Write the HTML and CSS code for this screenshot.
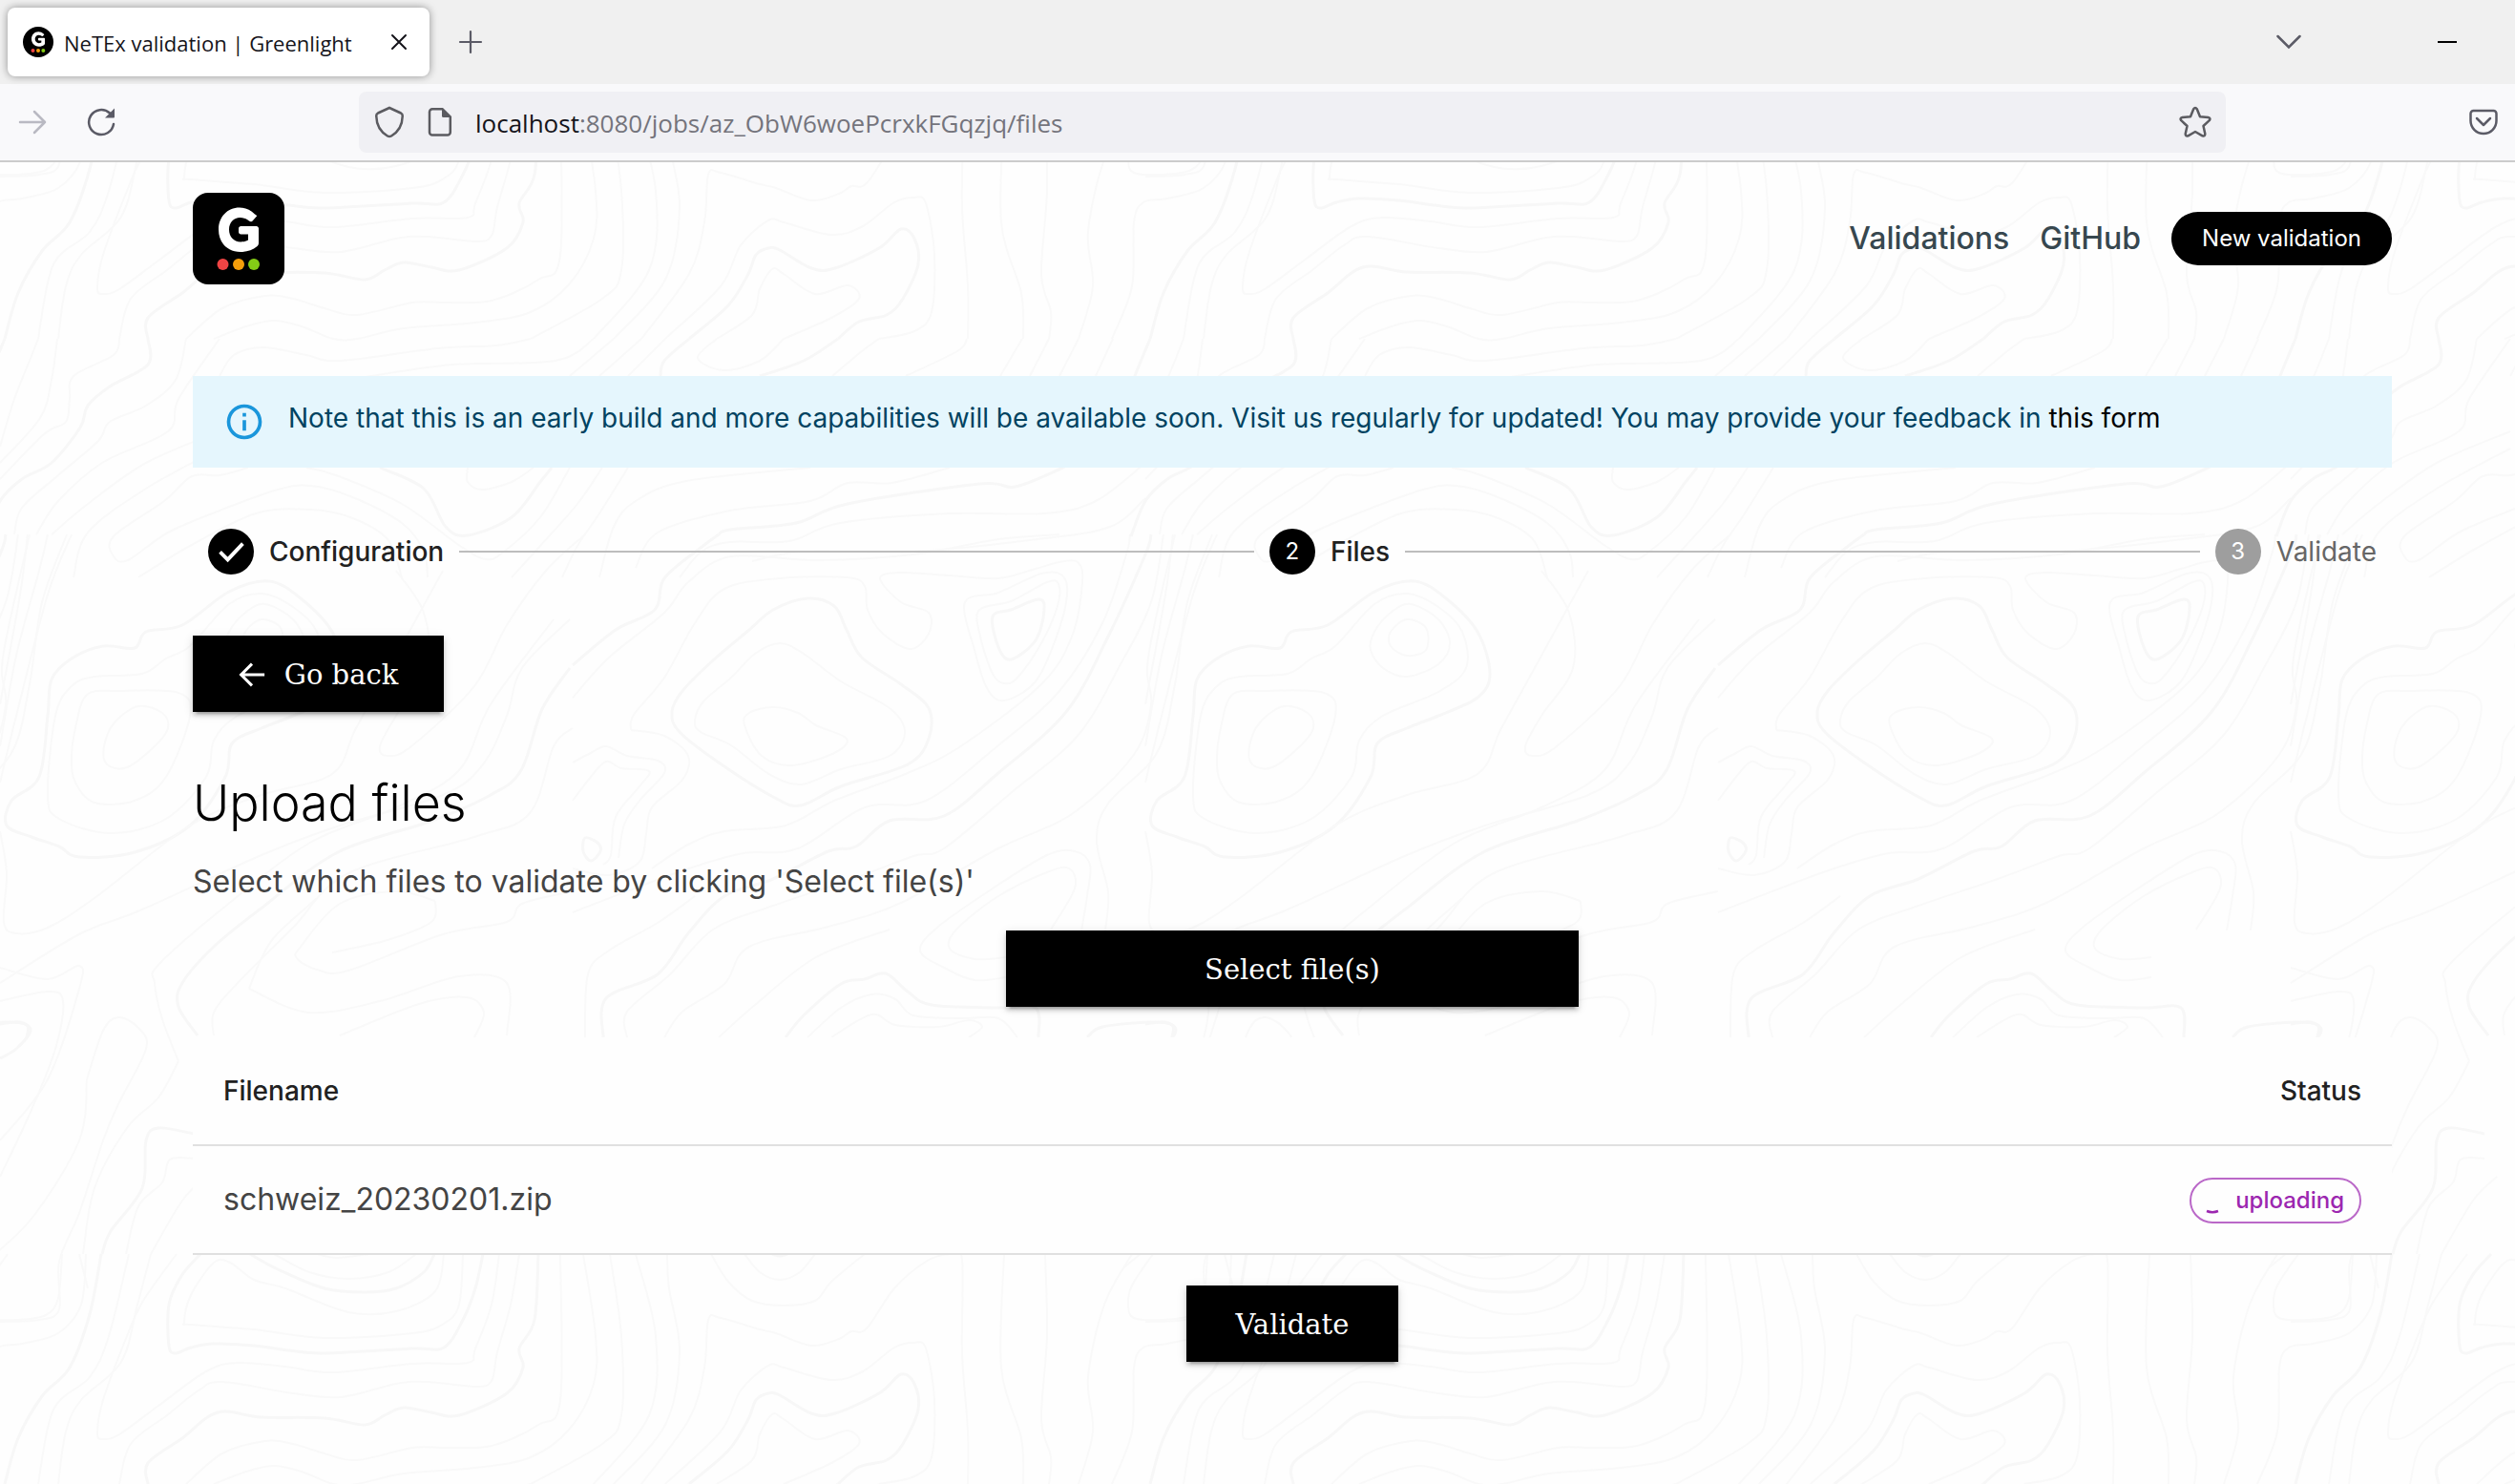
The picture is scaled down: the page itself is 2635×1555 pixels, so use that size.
FILE: index.html
```html
<!DOCTYPE html>
<html lang="en">
<head>
<meta charset="utf-8">
<title>NeTEx validation | Greenlight</title>
<link rel="stylesheet" href="styles.css">
</head>
<body>
<svg class="sprite" aria-hidden="true">
  <symbol id="mark" viewBox="0 0 96 96">
    <path d="M65 22.500C60 17.500 54.500 15.500 49 15.500C36 15.500 27 25.500 27 38.500C27 52 36 62 50 62C57 62 62.500 60 67.500 56C68.500 55 69 54 69 52.500V37.500C69 36 68 35 66.500 35H50.500C49 35 48 36 48 37.500V41C48 42.500 49 43.500 50.500 43.500H58V49.500C55.500 51 53 51.500 50 51.500C43 51.500 38 46 38 38.500C38 31 43 26 49.500 26C53 26 56 27 59 29.500C60.500 30.700 62 30.500 63 29L67 24.500C67.500 24 66.500 23.500 65 22.500Z" fill="#fff"/>
    <circle cx="31.500" cy="75" r="6" fill="#ef4444"/>
    <circle cx="48" cy="75" r="6" fill="#f59e0b"/>
    <circle cx="64" cy="75" r="6" fill="#84cc16"/>
  </symbol>
</svg>

<header class="browser">
  <div class="tabstrip">
    <div class="tab">
      <svg class="favicon" viewBox="0 0 96 96" aria-hidden="true"><circle cx="48" cy="48" r="48"/><use href="#mark" width="96" height="96"/></svg>
      <span class="tab-title">NeTEx validation | Greenlight</span>
      <button class="tool tab-close" aria-label="Close tab"><svg width="18" height="18" viewBox="0 0 18 18"><path d="M2 2l14 14M16 2L2 16" stroke="#15141a" stroke-width="2" stroke-linecap="round"/></svg></button>
    </div>
    <button class="tool" aria-label="New tab"><svg width="26" height="26" viewBox="0 0 26 26"><path d="M13 2v22M2 13h22" stroke="#5b5b66" stroke-width="2.200" stroke-linecap="round"/></svg></button>
    <div class="window-tools">
      <button class="tool" aria-label="List all tabs"><svg width="26" height="16" viewBox="0 0 26 16"><path d="M1.500 2L13 13.500L24.500 2" fill="none" stroke="#5b5b66" stroke-width="2.500" stroke-linecap="round"/></svg></button>
      <button class="tool" aria-label="Minimize"><svg width="20" height="2" viewBox="0 0 20 2"><path d="M0 1h20" stroke="#000" stroke-width="2"/></svg></button>
    </div>
  </div>
  <div class="toolbar">
    <div class="history">
      <button class="tool" aria-label="Forward" disabled><svg width="30" height="28" viewBox="0 0 30 28"><path d="M2 14h26M17 3l11 11L17 25" fill="none" stroke="#b9b9c2" stroke-width="2.500" stroke-linecap="round" stroke-linejoin="round"/></svg></button>
      <button class="tool" aria-label="Reload"><svg width="30" height="30" viewBox="0 0 30 30"><path d="M28 17A13 13 0 1 1 24 5.500" fill="none" stroke="#5b5b66" stroke-width="2.500" stroke-linecap="round"/><path d="M29 .5V9.500a1 1 0 0 1-1 1H19Z" fill="#5b5b66"/></svg></button>
    </div>
    <div class="urlbar">
      <svg width="32" height="34" viewBox="0 0 32 34" aria-hidden="true"><path d="M16 2L28 7.500Q30 8.500 29.700 11C29.500 20 26.500 26.500 18 31.500Q16 32.700 14 31.500C5.500 26.500 2.500 20 2.300 11Q2 8.500 4 7.500Z" fill="none" stroke="#5b5b60" stroke-width="2.500"/></svg>
      <svg width="26" height="32" viewBox="0 0 26 32" aria-hidden="true"><path d="M5 2.200H15.500L23.800 10.500V26.500A3 3 0 0 1 20.800 29.500H5A3 3 0 0 1 2 26.500V5.200A3 3 0 0 1 5 2.200Z" fill="none" stroke="#5b5b60" stroke-width="2.500"/><path d="M15 2V9.500A1.500 1.500 0 0 0 16.500 11H24.500Z" fill="#5b5b60"/></svg>
      <p class="url"><span class="url-host">localhost</span>:8080/jobs/az_ObW6woePcrxkFGqzjq/files</p>
      <button class="tool" aria-label="Bookmark this page"><svg width="36" height="34" viewBox="0 0 36 34"><path d="M16.200 3.300Q18 .8 19.800 3.300L23 11.200L31.500 12Q34.500 12.800 32.800 15.200L26.500 21L28.300 29.300Q28.300 32.300 25.500 31.300L18 27L10.500 31.300Q7.700 32.300 7.700 29.300L9.500 21L3.200 15.200Q1.500 12.800 4.500 12L13 11.200Z" fill="none" stroke="#5b5b60" stroke-width="2.500" stroke-linejoin="round"/></svg></button>
    </div>
    <button class="tool pocket" aria-label="Save to Pocket"><svg width="30" height="28" viewBox="0 0 30 28"><path d="M4.500 2h21A3 3 0 0 1 28.500 5v7.500a13.500 13.500 0 0 1-27 0V5A3 3 0 0 1 4.500 2Z" fill="none" stroke="#5b5b66" stroke-width="2.500"/><path d="M8 10l7 7 7-7" fill="none" stroke="#5b5b66" stroke-width="2.500" stroke-linecap="round" stroke-linejoin="round"/></svg></button>
  </div>
</header>

<div class="page">
  <svg class="contours" aria-hidden="true">
    <defs><pattern id="contours" width="1200" height="1200" patternUnits="userSpaceOnUse"></pattern></defs>
    <rect width="100%" height="100%" fill="url(#contours)"/>
  </svg>
  <div class="container">
    <header class="site-header">
      <a class="logo" href="#" aria-label="Greenlight"><svg width="96" height="96" aria-hidden="true"><use href="#mark"/></svg></a>
      <nav class="nav">
        <a href="#">Validations</a>
        <a href="#">GitHub</a>
        <button class="pill">New validation</button>
      </nav>
    </header>
    <main>
      <div class="alert" role="note">
        <svg width="44" height="44" viewBox="0 0 24 24" aria-hidden="true"><path fill="#1a96db" d="M11,9H13V7H11M12,20C7.590,20 4,16.410 4,12C4,7.590 7.590,4 12,4C16.410,4 20,7.590 20,12C20,16.410 16.410,20 12,20M12,2A10,10 0 0,0 2,12A10,10 0 0,0 12,22A10,10 0 0,0 22,12A10,10 0 0,0 12,2M11,17H13V11H11V17Z"/></svg>
        <p>Note that this is an early build and more capabilities will be available soon. Visit us regularly for updated! You may provide your feedback in <a href="#">this form</a></p>
      </div>

      <ol class="stepper">
        <li class="step">
          <span class="step-icon"><svg width="48" height="48" viewBox="0 0 24 24" aria-label="Completed"><path d="M6.300 12.200L10.300 16.200L18.200 7.800" fill="none" stroke="#fff" stroke-width="1.900"/></svg></span>
          <span>Configuration</span>
        </li>
        <li class="connector" aria-hidden="true"></li>
        <li class="step" aria-current="step"><span class="step-icon">2</span><span>Files</span></li>
        <li class="connector" aria-hidden="true"></li>
        <li class="step step-pending"><span class="step-icon">3</span><span>Validate</span></li>
      </ol>

      <button class="button button-back">
        <svg width="28" height="28" viewBox="0 0 32 32" aria-hidden="true"><path d="M31 16H4M16 3L3 16L16 29" fill="none" stroke="#fff" stroke-width="3.500"/></svg>
        Go back
      </button>

      <h1>Upload files</h1>
      <p class="lead">Select which files to validate by clicking 'Select file(s)'</p>
      <button class="button button-select">Select file(s)</button>

      <table class="files">
        <thead><tr><th scope="col">Filename</th><th scope="col" class="status">Status</th></tr></thead>
        <tbody><tr>
          <td>schweiz_20230201.zip</td>
          <td class="status"><span class="chip"><svg width="32" height="32" viewBox="0 0 32 32" aria-hidden="true"><path d="M10 27Q16 29.500 22 27" fill="none" stroke="#9c27b0" stroke-width="2.500"/></svg>uploading</span></td>
        </tr></tbody>
      </table>
      <button class="button button-validate">Validate</button>
    </main>
  </div>
</div>
<script src="contours.js"></script>
</body>
</html>
```
FILE: styles.css
```css
* { box-sizing: border-box; }

body {
  margin: 0;
  min-height: 100vh;
  display: flex;
  flex-direction: column;
  background: #fefefe;
  color: #444;
  font: 32px/48px Inter, "Liberation Sans", sans-serif;
}

h1, p, ol { margin: 0; }
a { color: inherit; text-decoration: none; }
button { font: inherit; border: 0; padding: 0; }
svg { display: block; flex: none; }
.sprite { position: absolute; width: 0; height: 0; }

/* Browser window */
.browser { font-family: "Segoe UI", "Open Sans", "Noto Sans", sans-serif; font-size: 22px; line-height: 32px; }
.tool { display: flex; background: none; }

.tabstrip {
  display: flex;
  align-items: center;
  gap: 30px;
  height: 88px;
  padding: 0 61px 0 8px;
  background: #f0f0f0;
}
.tab {
  display: flex;
  align-items: center;
  gap: 11px;
  width: 442px;
  height: 72px;
  padding: 0 23px 0 16px;
  border-radius: 8px;
  background: #fff;
  box-shadow: 0 0 8px rgba(0, 0, 0, .4);
  color: #15141a;
}
.favicon { width: 32px; height: 32px; }
.tab-title { padding-top: 2px; white-space: nowrap; }
.tab-close { margin-left: auto; }
.window-tools { display: flex; align-items: center; gap: 143px; margin-left: auto; }

.toolbar {
  display: flex;
  align-items: center;
  height: 82px;
  background: #f9f9fb;
  border-bottom: 2px solid #ccc;
}
.history { display: flex; align-items: center; gap: 42px; width: 376px; padding-left: 19px; }
.urlbar {
  flex: 1;
  display: flex;
  align-items: center;
  gap: 24px;
  height: 64px;
  padding: 0 14px 0 16px;
  border-radius: 8px;
  background: #f0f0f4;
}
.url { flex: 1; padding-top: 2px; font-size: 26px; color: #74747c; }
.url-host { color: #15141a; }
.pocket { margin: 0 18px 0 255px; }

/* Page */
.page { position: relative; flex: 1; }
.contours { position: absolute; inset: 0; width: 100%; height: 100%; }
.contours path { fill: none; stroke: #f9f9f9; stroke-width: 2; }
.contours .index { stroke: #f7f7f7; stroke-width: 3; }
.container { position: relative; padding: 32px 129px 96px 202px; }

.site-header { display: flex; justify-content: space-between; align-items: center; margin-bottom: 96px; }
.logo { border-radius: 16px; background: #000; }
.nav { display: flex; align-items: center; gap: 32px; color: #37474f; font-weight: 500; }
.pill {
  height: 56px;
  padding: 0 32px;
  border-radius: 28px;
  background: #000;
  color: #fff;
  font-size: 24px;
  font-weight: 400;
}

main { display: flex; flex-direction: column; align-items: flex-start; }

.alert {
  display: flex;
  align-items: center;
  gap: 24px;
  align-self: stretch;
  height: 96px;
  padding: 0 32px;
  background: #e5f6fd;
  color: #014361;
  font-size: 28px;
}
.alert p { padding-bottom: 8px; }
.alert a { color: #000; }

.stepper {
  display: flex;
  align-items: center;
  gap: 16px;
  align-self: stretch;
  margin: 64px 0;
  padding: 0 16px;
  list-style: none;
  font-size: 28px;
  font-weight: 500;
  color: #212121;
}
.step { display: flex; align-items: center; gap: 16px; }
.step-icon {
  display: flex;
  align-items: center;
  justify-content: center;
  width: 48px;
  height: 48px;
  border-radius: 50%;
  background: #000;
  color: #fff;
  font-size: 24px;
  font-weight: 400;
}
.step-pending { color: #666; font-weight: 400; }
.step-pending .step-icon { background: #9e9e9e; }
.connector { flex: 1; height: 2px; background: #bdbdbd; }

.button {
  display: flex;
  align-items: center;
  justify-content: center;
  height: 80px;
  padding-top: 2px;
  background: #000;
  color: #fff;
  font: 29px/48px "Roboto Slab", "DejaVu Serif", serif;
  box-shadow: 0 6px 2px -4px rgba(0, 0, 0, .2), 0 4px 4px rgba(0, 0, 0, .14), 0 2px 10px rgba(0, 0, 0, .12);
}
.button-back { gap: 20px; width: 263px; }
.button-select { align-self: center; width: 600px; }
.button-validate { align-self: center; width: 222px; }

h1 { margin: 64px 0 26px; font-size: 52px; line-height: 64px; font-weight: 300; color: #000; }
.lead { margin-bottom: 27px; }

.files { width: 100%; margin: 32px 0; border-collapse: collapse; background: #fefefe; }
.files th, .files td { height: 114px; padding: 0 32px; border-bottom: 2px solid #e0e0e0; text-align: left; }
.files th { height: 113px; font-size: 28px; font-weight: 500; color: #212121; }
.files .status { text-align: right; }
.chip {
  display: inline-flex;
  align-items: center;
  gap: 8px;
  height: 48px;
  padding: 0 16px 0 6px;
  border: 2px solid #ba68c8;
  border-radius: 24px;
  color: #9c27b0;
  font-size: 24px;
  font-weight: 500;
  vertical-align: middle;
}
```
FILE: contours.js
```js
// Contour-line background: one 1200px tile, repeated in both directions.
// Each sheet has its own origin and scale; "*" marks the heavier index lines, "o" closed ones.
const TILE = 1200;
const sheets = [
  { x: 100, y: -70, sx: 0.829, sy: 0.3333, lines: `
-20,43 -10,150
*490,43 480,150 465,250 440,335 400,340 290,355 245,345 200,330 150,325 121,335 101,355 93,330 93,200 108,110 133,43
465,43 460,200 440,260 400,290 290,305 200,278 121,263 112,255 121,170 150,70 170,70 200,122 240,150 320,225 380,222 430,160 440,43
*195,43 230,90 290,150 340,162 380,150 415,100 428,43
225,43 270,100 320,120 370,100 405,43
280,43 305,54 345,43
510,43 500,200 480,340 470,384 400,386 300,415 240,395 180,383 140,410 80,520 30,610 10,625 3,605 10,500 40,300 60,190 103,43
535,43 525,200 508,350 500,440 480,458 420,443 380,450 310,492 250,480 160,445 130,470 90,550 45,640 30,765
*560,43 555,250 535,340 540,400 520,480 460,550 425,540 390,525 365,550 340,578 290,558 210,555 155,540 110,620 66,700 66,765
587,43 588,500 560,580 500,645 440,650 400,650 330,690 290,670 250,640 215,630 160,670 115,765
617,43 632,300 630,450 600,590 550,680 480,715 390,732 330,765 300,765 260,725 225,708 190,725 150,765
650,43 665,300 665,550 640,640 550,765
683,43 708,300 700,550 630,765
722,43 725,150 738,350 720,580 655,765
778,43 800,130 830,190 870,205 910,190 930,130 972,43
820,43 840,100 865,123 890,100 910,43
*855,43 865,48 875,43
690,765 750,560 770,400 775,250 790,243 840,280 860,290 905,330 940,310 955,285 975,275 1010,150 1050,65 1080,43 1095,60 1095,350 1103,600 1102,765
720,765 790,600 815,470 850,393 870,400 930,437 970,410 1010,335 1035,320 1050,340 1060,500 1057,680 1035,740 990,765
*750,765 800,660 825,560 835,500 850,480 865,485 905,543 935,543 990,480 1018,420 1035,450 1040,530 1020,640 1000,690 965,710 938,765
785,765 830,690 840,610 855,545 870,560 910,623 950,598 965,640 930,700 870,765
1148,43 1145,400 1170,620 1172,765
1200,43 1203,300 1195,560 1207,680 1205,765
1310,43 1275,200 1255,430 1260,600 1242,765
1337,43 1310,140 1305,200 1312,243 1350,250 1385,235 1400,180 1405,43
1435,43 1430,200 1400,290 1355,323 1325,335 1312,400 1310,600 1285,765
*1455,43 1440,230 1415,400 1380,490 1350,620 1333,765
1490,43 1465,300 1440,430 1395,530 1375,765
1517,43 1500,200 1480,380 1430,500 1410,600 1400,765` },
  { x: 0, y: 165, sx: 0.7653, sy: 0.3333, lines: `
163,570 155,620 100,687 95,760 90,830 60,870 0,1010
*202,570 203,650 150,720 120,780 110,850 70,960 30,1010 0,1080 -20,1190
255,570 240,700 200,780 150,830 135,890 80,1000 30,1100 20,1185
300,570 245,760 230,860 140,960 80,1080 50,1185
52,570 40,640 20,760 0,910
79,570 70,700 55,820 0,960
*6,570 -15,687 -40,850 -113,975
300,860 200,960 120,1090 70,1185
300,915 200,1040 120,1180 100,1320
340,975 300,1000 262,1003 225,1080 155,1190 155,1255 175,1265 230,1180 300,1110 380,1045 425,1033 480,1065 550,1150 580,1240 585,1320
190,1320 260,1220 350,1120 425,1106 480,1130 530,1200 550,1320
727,570 680,590 600,600 465,640 420,620 360,597 320,620 300,687
813,570 760,640 620,650 500,690
840,570 780,687
878,570 820,687
911,570 860,687
*943,570 910,640 904,687
981,570 955,630 990,670 1040,640 1073,570
*1147,570 1100,640 1040,687
1203,570 1180,610 1140,687
1324,570 1310,610 1240,687
1400,570 1370,687
1436,570 1410,687
1476,570 1450,687
1523,570 1500,687
640,975 640,1020 660,1045 700,1020 730,975
*520,975 580,1040 610,1160 640,1187 700,1130 740,1020 755,975
780,975 740,1130 690,1240 665,1263 630,1220 550,1090 460,1000 420,975
825,975 790,1090 740,1220 700,1320
860,975 820,1120 790,1220 770,1320
1110,975 940,1018 870,1080 840,1160 820,1320
1300,975 1220,1022 1160,1022 1110,1080 1000,1110 900,1180 870,1290
*1455,975 1390,1035 1340,1025 1160,1090 1090,1150 1000,1170 984,1185
1568,960 1500,1080 1430,1120 1300,1118 1150,1150 1080,1205 1000,1210 960,1240 930,1320
1568,1070 1520,1160 1420,1200 1250,1240 1100,1240 1030,1270` },
  { x: 0, y: 560, sx: 0.829, sy: 0.6346, lines: `
o*8,480 15,440 50,400 60,300 65,240 90,205 130,185 170,187 185,160 230,150 290,95 340,77 380,105 420,160 435,230 420,270 370,300 330,320 293,345 285,400 240,480 170,525 100,533 75,515 40,500
o60,430 70,300 90,250 120,235 180,230 210,205 240,185 290,115 330,97 370,120 400,160 405,220 370,260 300,300 270,340 260,400 210,470 140,493 75,470
o290,160 310,130 335,115 370,140 385,180 370,215 330,235 300,220 285,190
o310,160 330,140 355,155 355,190 330,200 310,185
o90,370 95,320 110,265 150,258 225,262 240,300 210,400 170,440 120,443 95,410
o132,350 145,310 175,284 205,295 212,320 195,350 160,385 135,380
500,60 535,130 540,220 500,300 480,350 490,365 520,350 600,250 640,150 690,60 740,0
0,410 20,300 60,100 90,0
0,350 20,200 50,60 60,0
0,280 25,100 35,0
0,490 8,560 5,640 20,658 60,650 120,600 240,480 330,430 420,395 450,320 500,200 560,60
*250,828 225,780 230,740 270,680 328,620 427,525 546,473 620,430 659,389 685,288 720,220
0,740 100,660 180,620 330,530 430,480 560,430 610,380 640,300 660,220 720,140
225,870 205,800 195,740 200,710 280,620 390,510 500,450 580,390 620,280 700,140
270,828 270,790 300,740 370,650 440,560 600,500 670,460 700,350 724,320
550,605 500,590 430,610 380,680 375,700 400,718 440,720 560,660 640,640 660,610 724,590
550,605 545,640 490,670 420,690
430,828 530,775 590,765 612,790 600,830
315,750 330,700 350,660 400,600
315,750 390,790 480,770 580,730 640,740 640,828
0,715 60,735 100,712 100,750 60,900 0,1000
0,770 60,755 80,770 70,850 40,950 0,1060
*0,808 25,805 38,820 20,850 0,865
110,900 130,820 150,797 175,815 185,850 150,940 130,1000 100,1120 75,1200 75,1280 50,1297 0,1300
-26,1210 40,1130 100,1000 110,900
225,870 200,930 160,980 120,1080 105,1188
*245,990 200,980 185,1000 180,1080 140,1150 129,1188
245,1030 215,1032 205,1070 175,1110 159,1188
260,1060 230,1100 190,1188` },
  { x: 600, y: 560, sx: 0.6378, sy: 0.3571, lines: `
*0,385 70,280 135,220 150,130 210,40 240,0
o*163,520 180,460 230,370 290,280 330,220 385,188 430,210 450,280 475,360 540,440 585,510 585,600 550,675 440,740 375,795 330,770 240,670 175,580
o200,545 215,490 260,420 300,350 340,318 380,350 440,430 520,510 545,580 520,650 440,690 375,733 320,700 260,620 210,580
o283,560 290,525 330,508 370,525 400,560 450,600 430,640 360,678 310,650
0,480 60,360 150,230 190,140 260,65 400,75 560,60 700,15 800,0
95,575 100,530 150,420 200,260 250,160 340,130 450,125 480,150 485,220 510,290 555,335 585,290 585,230 540,200 505,130 540,112 620,120 700,130 760,100 800,80 830,80 838,140 820,300 770,440 640,620 550,700 430,780 350,855 250,870 190,910 130,980
o645,200 700,170 770,115 805,120 812,180 795,300 760,430 708,488 680,450 660,340
o668,220 720,195 780,140 798,145 797,210 770,320 730,420 708,438 690,410 670,300
o*690,240 720,222 765,190 775,220 760,310 720,368 700,330
95,575 150,590 190,650 180,720 130,800 120,880 110,960 60,1000 0,980
0,670 30,640 55,622 90,650 140,665 150,700 110,780 85,850 75,950
0,780 30,710 55,667 80,685 125,695 110,740 70,830 62,940 50,970
o*20,890 40,905 45,930 30,958 18,930
0,1110 130,1020 200,975 280,935 370,920 480,800 580,780 700,620 800,460 870,260 910,60 915,0
*50,1475 55,1360 140,1290 190,1170 250,1060 330,1010 420,930 465,915 520,840 610,825 700,700 810,520 880,300 940,60 950,0
20,1475 25,1290 60,1220 140,1140 200,1060
90,1475 90,1400 160,1290 230,1160 330,1090 460,1010 560,945 610,920 720,760 830,590 900,380 950,200 970,0
150,1475 180,1400 250,1320 290,1210 420,1150 540,1080 700,920 820,820 920,650 950,500 945,360 990,0
240,1475 300,1380 400,1240 520,1160
785,1160 825,1040 815,980 780,990 700,1060 630,1160 620,1215 660,1245 712,1240
712,1300 660,1307 610,1270 570,1220 600,1150 690,1040 780,940 825,930 850,970 845,1060 835,1162
875,1162 880,1050 860,900 880,790 960,640 990,440 1010,200 1050,0
*350,1475 380,1410 440,1320 480,1305 515,1288 550,1340 590,1380 700,1388 760,1388 765,1475
385,1475 440,1390 490,1350 530,1365 560,1410 640,1420 700,1420 730,1475
425,1475 490,1408 530,1440 600,1445 650,1425 672,1445 650,1475
*845,1475 870,1445 950,1430 985,1440 985,1475` },
];

// Catmull-Rom spline through the points, as cubic segments.
function toPath(points, closed) {
  const n = points.length;
  const at = i => closed ? points[(i + n) % n] : points[Math.max(0, Math.min(n - 1, i))];
  let d = `M${points[0]}`;
  for (let i = 0; i < (closed ? n : n - 1); i++) {
    const [p, a, b, q] = [at(i - 1), at(i), at(i + 1), at(i + 2)];
    d += `C${a[0] + (b[0] - p[0]) / 6},${a[1] + (b[1] - p[1]) / 6} ${b[0] - (q[0] - a[0]) / 6},${b[1] - (q[1] - a[1]) / 6} ${b}`;
  }
  return d;
}

let lines = '';
for (const s of sheets) {
  for (const line of s.lines.trim().split('\n')) {
    const closed = line.includes('o');
    const index = line.includes('*');
    const points = line.replace(/[o*]/g, '').split(' ').map(p => {
      const [x, y] = p.split(',').map(Number);
      return [Math.round(s.x + x * s.sx), Math.round(s.y - 170 + y * s.sy + (s.y < 0 ? 170 : 0))];
    });
    lines += `<path${index ? ' class="index"' : ''} d="${toPath(points, closed)}"/>`;
  }
}

let copies = '';
for (const dx of [-TILE, 0, TILE]) {
  for (const dy of [-TILE, 0, TILE]) copies += `<g transform="translate(${dx} ${dy})">${lines}</g>`;
}
document.getElementById('contours').innerHTML = copies;
```
